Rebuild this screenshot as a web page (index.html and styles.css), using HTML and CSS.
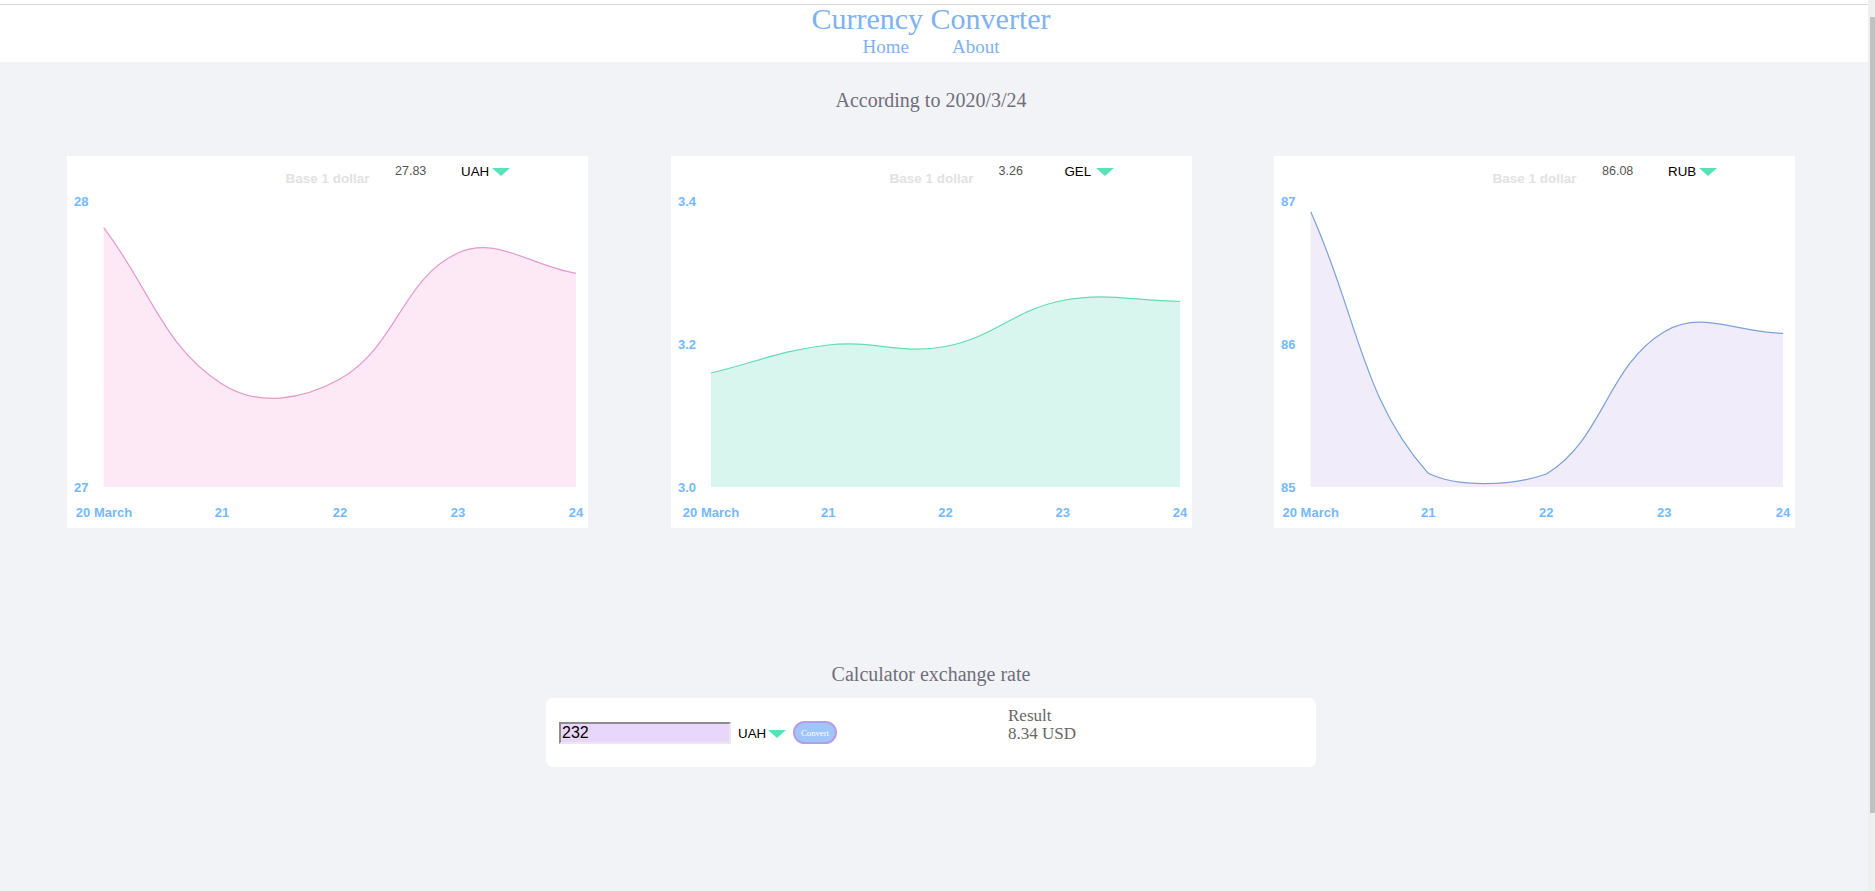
FILE: index.html
```html
<!DOCTYPE html>
<html lang="en">
<head>
<meta charset="utf-8">
<title>Currency Converter</title>
<link rel="stylesheet" href="styles.css">
</head>
<body>
<div class="app">
  <div class="page">
    <div class="rule"></div>
    <header class="header">
      <h1 class="title">Currency Converter</h1>
      <nav class="nav"><a href="#">Home</a><a href="#">About</a></nav>
    </header>
    <main class="main">
      <h2 class="heading date">According to 2020/3/24</h2>
      <section class="charts">
        <div class="card">
          <svg class="chart" width="521" height="372" viewBox="0 0 521 372">
            <text class="legend" x="260.5" y="27" text-anchor="middle">Base 1 dollar</text>
            <path class="area uah" d="M36.7,71.7 C84,134.2 96,190.2 155,228 C190.5,250.8 234.7,244.3 273,223 C329.1,191.9 335.3,122 391,97 C429.7,79.7 461.8,109.2 509,117.3 L509,331 L36.7,331 Z"/>
            <path class="line uah" d="M36.7,71.7 C84,134.2 96,190.2 155,228 C190.5,250.8 234.7,244.3 273,223 C329.1,191.9 335.3,122 391,97 C429.7,79.7 461.8,109.2 509,117.3"/>
            <text class="tick" x="7" y="50">28</text>
            <text class="tick" x="7" y="336">27</text>
            <text class="tick" x="37" y="361" text-anchor="middle">20 March</text>
            <text class="tick" x="155" y="361" text-anchor="middle">21</text>
            <text class="tick" x="273" y="361" text-anchor="middle">22</text>
            <text class="tick" x="391" y="361" text-anchor="middle">23</text>
            <text class="tick" x="509" y="361" text-anchor="middle">24</text>
          </svg>
          <div class="controls">
            <span class="value">27.83</span>
            <span class="select">UAH<svg class="tri" width="18" height="8" viewBox="0 0 18 8"><path d="M0 0H18L9 8Z"/></svg></span>
          </div>
        </div>
        <div class="card">
          <svg class="chart" width="521" height="372" viewBox="0 0 521 372">
            <text class="legend" x="260.5" y="27" text-anchor="middle">Base 1 dollar</text>
            <path class="area gel" d="M40,217 C86.9,205.8 109.7,194.4 157.25,189 C203.5,183.8 229.3,199.1 274.5,190.5 C323.1,181.3 343.2,153.8 391.75,144.5 C437,135.8 462.1,145.1 509,145.5 L509,331 L40,331 Z"/>
            <path class="line gel" d="M40,217 C86.9,205.8 109.7,194.4 157.25,189 C203.5,183.8 229.3,199.1 274.5,190.5 C323.1,181.3 343.2,153.8 391.75,144.5 C437,135.8 462.1,145.1 509,145.5"/>
            <text class="tick" x="7" y="50">3.4</text>
            <text class="tick" x="7" y="193">3.2</text>
            <text class="tick" x="7" y="336">3.0</text>
            <text class="tick" x="40" y="361" text-anchor="middle">20 March</text>
            <text class="tick" x="157.25" y="361" text-anchor="middle">21</text>
            <text class="tick" x="274.5" y="361" text-anchor="middle">22</text>
            <text class="tick" x="391.75" y="361" text-anchor="middle">23</text>
            <text class="tick" x="509" y="361" text-anchor="middle">24</text>
          </svg>
          <div class="controls">
            <span class="value">3.26</span>
            <span class="select">GEL<svg class="tri" width="18" height="8" viewBox="0 0 18 8"><path d="M0 0H18L9 8Z"/></svg></span>
          </div>
        </div>
        <div class="card">
          <svg class="chart" width="521" height="372" viewBox="0 0 521 372">
            <text class="legend" x="260.5" y="27" text-anchor="middle">Base 1 dollar</text>
            <path class="area rub" d="M36.7,55.7 C83.7,160.3 87.5,243 154.3,317.3 C181.8,331 235.5,331 272.3,318 C329.9,283.4 332.6,210 390.3,175.7 C427.3,153.7 461.5,176.7 509,177.3 L509,331 L36.7,331 Z"/>
            <path class="line rub" d="M36.7,55.7 C83.7,160.3 87.5,243 154.3,317.3 C181.8,331 235.5,331 272.3,318 C329.9,283.4 332.6,210 390.3,175.7 C427.3,153.7 461.5,176.7 509,177.3"/>
            <text class="tick" x="7" y="50">87</text>
            <text class="tick" x="7" y="193">86</text>
            <text class="tick" x="7" y="336">85</text>
            <text class="tick" x="36.7" y="361" text-anchor="middle">20 March</text>
            <text class="tick" x="154.3" y="361" text-anchor="middle">21</text>
            <text class="tick" x="272.3" y="361" text-anchor="middle">22</text>
            <text class="tick" x="390.3" y="361" text-anchor="middle">23</text>
            <text class="tick" x="509" y="361" text-anchor="middle">24</text>
          </svg>
          <div class="controls">
            <span class="value">86.08</span>
            <span class="select">RUB<svg class="tri" width="18" height="8" viewBox="0 0 18 8"><path d="M0 0H18L9 8Z"/></svg></span>
          </div>
        </div>
      </section>
      <h2 class="heading calc-title">Calculator exchange rate</h2>
      <div class="calc">
        <div class="calc-form">
          <input class="amount" type="text" value="232">
          <span class="select calc-select">UAH<svg class="tri" width="18" height="8" viewBox="0 0 18 8"><path d="M0 0H18L9 8Z"/></svg></span>
          <button class="convert" type="button">Convert</button>
        </div>
        <div class="result">
          <div>Result</div>
          <div>8.34 USD</div>
        </div>
      </div>
    </main>
  </div>
  <div class="scrollbar"><div class="thumb"></div></div>
</div>
</body>
</html>
```

FILE: styles.css
```css
* { box-sizing: border-box; }
html, body { margin: 0; height: 100%; }
body {
  background: #f2f3f7;
  font-family: "Liberation Serif", "Times New Roman", serif;
  overflow: hidden;
}
.app { display: flex; min-height: 891px; }
.page { flex: 1; min-width: 0; }

.rule { height: 5px; background: #fff; border-bottom: 1px solid #d9d9d9; }
.header {
  background: #fff;
  height: 57px;
  padding-right: 6px;
  display: flex;
  flex-direction: column;
  align-items: center;
}
.title {
  margin: 0;
  font-size: 30px;
  line-height: 28px;
  font-weight: normal;
  color: #7eb2f0;
}
.nav {
  margin-top: 3px;
  display: flex;
  gap: 43px;
  font-size: 19px;
  line-height: 22px;
}
.nav a { color: #7eb2f0; text-decoration: none; }

.main {
  padding-right: 6px;
  display: flex;
  flex-direction: column;
  align-items: center;
}
.heading {
  margin: 0;
  font-size: 20px;
  line-height: 23px;
  font-weight: normal;
  color: #6f6f7a;
}
.date { margin-top: 27px; }
.charts { margin-top: 44px; display: flex; gap: 82.5px; }
.card { position: relative; width: 521px; height: 372px; background: #fff; }
.chart { display: block; }

.legend { font: bold 13.5px "Liberation Sans", Arial, sans-serif; fill: #e2e2e2; }
.tick { font: bold 13px "Liberation Sans", Arial, sans-serif; fill: #74b9ff; }
.line { fill: none; stroke-width: 1.2; }
.area.uah { fill: #fce9f5; }
.line.uah { stroke: #e59ac9; }
.area.gel { fill: #d8f6ee; }
.line.gel { stroke: #62dcb3; }
.area.rub { fill: #f1ecf9; }
.line.rub { stroke: #7aa1dd; }

.controls {
  position: absolute;
  top: 8px;
  left: 328px;
  display: flex;
  align-items: flex-start;
}
.value {
  width: 66px;
  font: 12.5px/15px "Liberation Sans", Arial, sans-serif;
  color: #555;
}
.select {
  width: 49px;
  display: flex;
  justify-content: space-between;
  align-items: flex-start;
  font: 13.33px/16px "Liberation Sans", Arial, sans-serif;
  color: #000;
}
.tri { display: block; margin-top: 4px; }
.tri path { fill: #58e2b8; }

.calc-title { margin-top: 135px; }
.calc {
  margin-top: 12px;
  width: 770px;
  height: 69px;
  background: #fff;
  border-radius: 7px;
  display: grid;
  grid-template-columns: 60% 40%;
}
.calc-form {
  display: flex;
  align-items: center;
  gap: 7px;
  padding-left: 13px;
}
.amount {
  width: 172px;
  height: 22px;
  margin: 0;
  padding: 0 1px;
  border-style: solid;
  border-width: 2px;
  border-color: #8c8c8c #ebe6f0 #ebe6f0 #8c8c8c;
  background: #e8d7fb;
  font: 16px "Liberation Sans", Arial, sans-serif;
  color: #000;
  outline: none;
}
.calc-select { width: 48px; margin-top: 3px; }
.convert {
  width: 44px;
  height: 23px;
  margin: 0;
  padding: 0;
  border: 2px solid #b69ee2;
  border-radius: 12px;
  background: #a0c5fb;
  color: #fff;
  font: 8.7px "Liberation Serif", serif;
}
.result {
  padding-top: 9px;
  font-size: 17px;
  line-height: 17.6px;
  color: #666;
}

.scrollbar {
  flex: none;
  width: 7px;
  background: #efefef;
  padding: 17px 0 0 2px;
}
.thumb { height: 796px; background: #c1c1c1; }
```
